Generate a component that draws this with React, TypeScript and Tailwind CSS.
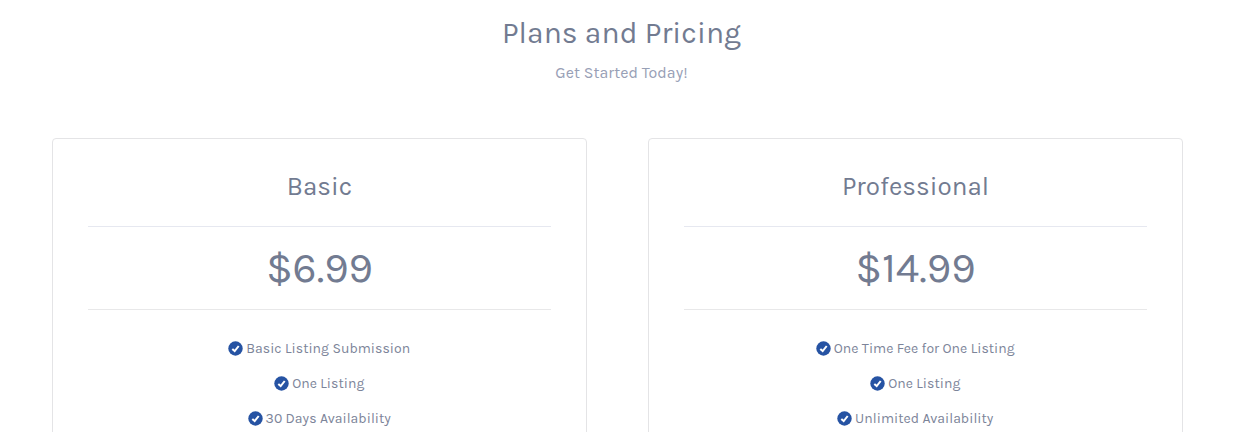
import React from 'react';

interface Plan {
	name: string;
	price: string;
	features: string[];
}

const plans: Plan[] = [
	{
		name: 'Basic',
		price: '$6.99',
		features: [
			'Basic Listing Submission',
			'One Listing',
			'30 Days Availability',
		],
	},
	{
		name: 'Professional',
		price: '$14.99',
		features: [
			'One Time Fee for One Listing',
			'One Listing',
			'Unlimited Availability',
		],
	},
];

const CheckIcon: React.FC = () => {
	return (
		<svg viewBox="0 0 15 15" className="h-[15px] w-[15px] shrink-0">
			<circle cx="7.5" cy="7.5" r="7.2" fill="#2653a3" />
			<path
				d="M4.3 7.9 6.7 10.1 10.7 5"
				fill="none"
				stroke="#fff"
				strokeWidth="2"
			/>
		</svg>
	);
};

const PlanCard: React.FC<{ plan: Plan }> = ({ plan }) => {
	return (
		<div className="flex h-[320px] flex-col rounded-[4px] border border-[#e4e4e6] px-[35px] text-center">
			<h3 className="h-[88px] border-b border-[#e6e8f0] pt-[30px] text-[26px] leading-[36px] tracking-[0.03px]">
				{plan.name}
			</h3>
			<div className="h-[83px] border-b border-[#e8e8e9] text-[42px] leading-[82px]">
				{plan.price}
			</div>
			<ul className="pt-[21px]">
				{plan.features.map((feature) => (
					<li
						key={feature}
						className="flex h-[35px] items-center justify-center gap-[3px] pr-[0.5px] text-[14px] tracking-[0.03px] text-[#7c8499]"
					>
						<CheckIcon />
						<span>{feature}</span>
					</li>
				))}
			</ul>
		</div>
	);
};

const App: React.FC = () => {
	return (
		<div className="h-[432px] w-full overflow-hidden bg-white font-[Karla,Inter,sans-serif] text-[#727b91] antialiased">
			<header className="flex h-[138px] flex-col items-center pt-[13px] pl-[5px]">
				<h2 className="text-[30px] leading-[40px] tracking-[0.08px]">
					Plans and Pricing
				</h2>
				<p className="mt-[8px] text-[16px] leading-[24px] tracking-[0.03px] text-[#98a0b6]">
					Get Started Today!
				</p>
			</header>
			<main className="grid grid-cols-[535px_535px] gap-[61px] pl-[52px]">
				{plans.map((plan) => (
					<PlanCard key={plan.name} plan={plan} />
				))}
			</main>
		</div>
	);
};

export default App;
